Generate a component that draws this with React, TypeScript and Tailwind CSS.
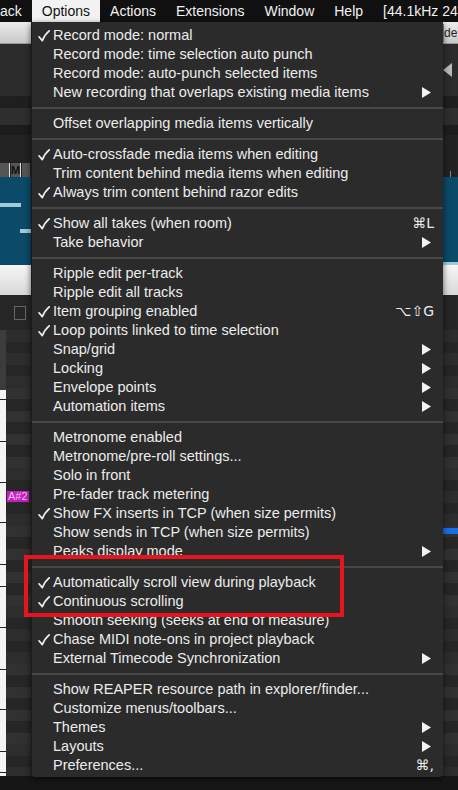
import type { ReactNode } from 'react';

type Item = { label: string; check?: boolean; sub?: boolean; keys?: string } | 'sep';

const items: Item[] = [
  { label: 'Record mode: normal', check: true },
  { label: 'Record mode: time selection auto punch' },
  { label: 'Record mode: auto-punch selected items' },
  { label: 'New recording that overlaps existing media items', sub: true },
  'sep',
  { label: 'Offset overlapping media items vertically' },
  'sep',
  { label: 'Auto-crossfade media items when editing', check: true },
  { label: 'Trim content behind media items when editing' },
  { label: 'Always trim content behind razor edits', check: true },
  'sep',
  { label: 'Show all takes (when room)', check: true, keys: '⌘L' },
  { label: 'Take behavior', sub: true },
  'sep',
  { label: 'Ripple edit per-track' },
  { label: 'Ripple edit all tracks' },
  { label: 'Item grouping enabled', check: true, keys: '⌥⇧G' },
  { label: 'Loop points linked to time selection', check: true },
  { label: 'Snap/grid', sub: true },
  { label: 'Locking', sub: true },
  { label: 'Envelope points', sub: true },
  { label: 'Automation items', sub: true },
  'sep',
  { label: 'Metronome enabled' },
  { label: 'Metronome/pre-roll settings...' },
  { label: 'Solo in front' },
  { label: 'Pre-fader track metering' },
  { label: 'Show FX inserts in TCP (when size permits)', check: true },
  { label: 'Show sends in TCP (when size permits)' },
  { label: 'Peaks display mode', sub: true },
  'sep',
  { label: 'Automatically scroll view during playback', check: true },
  { label: 'Continuous scrolling', check: true },
  { label: 'Smooth seeking (seeks at end of measure)' },
  { label: 'Chase MIDI note-ons in project playback', check: true },
  { label: 'External Timecode Synchronization', sub: true },
  'sep',
  { label: 'Show REAPER resource path in explorer/finder...' },
  { label: 'Customize menus/toolbars...' },
  { label: 'Themes', sub: true },
  { label: 'Layouts', sub: true },
  { label: 'Preferences...', keys: '⌘,' },
];

const topMenus = ['Actions', 'Extensions', 'Window', 'Help', '[44.1kHz 24'];

// 12 semitone rows per octave, true = black key row (darker)
const octave = [false, true, false, true, false, false, true, false, true, false, true, false];

function Arrow() {
  return (
    <svg width="9" height="11" viewBox="0 0 9 11" className="mr-[2px]">
      <path d="M0 0 L9 5.5 L0 11 Z" fill="#f2f2f2" />
    </svg>
  );
}

function Check() {
  return (
    <svg width="12" height="12" viewBox="0 0 12 12">
      <path d="M1 6.8 L4.3 10.6 C6 6.5 8 3.4 11.2 0.8" fill="none" stroke="#efefef" strokeWidth="1.7" strokeLinecap="round" strokeLinejoin="round" />
    </svg>
  );
}

function Band({ h, className, children }: { h: string; className: string; children?: ReactNode }) {
  return <div className={`${h} ${className} relative shrink-0`}>{children}</div>;
}

function PianoRoll() {
  const rows = Array.from({ length: 40 }, (_, i) => octave[i % 12]);
  const keyLines = [10, 52, 93, 133, 175, 197, 238, 280, 320, 362, 383, 424];
  return (
    <div className="flex h-[446px] shrink-0 overflow-hidden">
      <div className="flex w-[6px] shrink-0 flex-col">
        <div className="h-[60px] shrink-0 bg-[#3c3c3c]" />
        {keyLines.map((k, i) => (
          <div key={k} className="shrink-0 border-b border-[#222] bg-[#f4f4f4]" style={{ height: i === 0 ? 10 : k - keyLines[i - 1] }} />
        ))}
      </div>
      <div className="flex flex-1 flex-col">
        {rows.map((dark, i) => (
          <div key={i} className={`flex h-[11.5px] shrink-0 items-center ${dark ? 'bg-[#262626]' : i % 2 ? 'bg-[#313131]' : 'bg-[#2d2d2d]'}`}>
            {i === 14 && <span className="ml-[1px] bg-[#c21fc2] px-[1px] text-[11px] leading-[11px] text-[#f0c0f0]">A#2</span>}
            {i === 17 && <div className="ml-auto h-[6px] w-[15px] bg-[#1a6fe6]" />}
          </div>
        ))}
      </div>
    </div>
  );
}

function OptionsMenu() {
  return (
    <div className="absolute left-[31px] top-[22px] w-[412px] rounded-b-[4px] border-l border-[#1a1a1a] bg-[#2b2b2b] pb-[2px] pt-[4px] shadow-[0_2px_6px_rgba(0,0,0,0.6)]">
      {items.map((it, i) =>
        it === 'sep' ? (
          <div key={i} className="flex h-[12px] items-center">
            <div className="h-[2px] w-full bg-[#484848]" />
          </div>
        ) : (
          <div key={i} className="flex h-[19px] items-center text-[14.5px] text-[#ececec]">
            <span className="flex w-[21px] shrink-0 items-center pl-[6px]">{it.check && <Check />}</span>
            <span className="flex-1 whitespace-nowrap">{it.label}</span>
            {it.keys && <span className="whitespace-nowrap pr-[9px] font-['DejaVu_Sans',sans-serif] text-[14px]">{it.keys}</span>}
            {it.sub && (
              <span className="pr-[10px]">
                <Arrow />
              </span>
            )}
          </div>
        ),
      )}
    </div>
  );
}

export default function App() {
  return (
    <div className="relative flex h-[790px] w-[458px] flex-col overflow-hidden bg-[#1a1a1a] font-['Liberation_Sans',Arial,sans-serif]">
      <div className="flex h-[22px] shrink-0 items-center bg-[#101010] text-[14px] text-[#f2f2f2]">
        <span className="pr-[10px]">ack</span>
        <span className="flex h-full items-center bg-[#f2f2f2] px-[10px] text-[#111]">Options</span>
        {topMenus.map((m) => (
          <span key={m} className="whitespace-nowrap px-[10px]">
            {m}
          </span>
        ))}
      </div>

      <Band h="h-[22px]" className="flex items-center justify-end border-b border-[#999] bg-gradient-to-b from-[#ececec] to-[#c9c9c9]">
        <span className="w-[15px] border-l border-[#888] text-[12px] text-[#222]">de</span>
      </Band>
      <Band h="h-[52px]" className="flex items-center justify-end bg-[#2c2c2c]">
        <svg width="9" height="14" viewBox="0 0 9 14" className="mr-[6px]">
          <path d="M9 0 L0 7 L9 14 Z" fill="#b8b8b8" />
        </svg>
      </Band>
      <Band h="h-[12px]" className="bg-[#1f1f1f]" />
      <Band h="h-[17px]" className="bg-[#2e2e2e]" />
      <Band h="h-[10px]" className="bg-[#1c1c1c]" />
      <Band h="h-[42px]" className="flex items-end bg-[#222]">
        <div className="flex h-[14px] w-[31px] items-center gap-[1px] text-[11px] font-bold leading-none text-[#111]">
          <span className="h-full w-[10px] border-r border-[#ddd] bg-[#555]" />
          <span className="flex h-full w-[10px] items-center justify-center border-r border-[#ddd] bg-[#555]">M</span>
          <span className="h-full w-[8px] bg-[#555]" />
        </div>
        <div className="ml-auto mr-[7px] h-[6px] w-px self-end bg-[#888]" />
      </Band>
      <Band h="h-[88px]" className="flex flex-col bg-[#0b4a68]">
        <div className="mt-[26px] h-[4px] w-[21px] bg-[#9fcadb]" />
        <div className="ml-[20px] mt-[22px] h-[4px] w-[11px] bg-[#9fcadb]" />
        <div className="ml-auto mt-auto h-[3px] w-[15px] bg-[#9fcadb]" />
      </Band>
      <Band h="h-[30px]" className="bg-gradient-to-b from-[#f6f6f6] to-[#d8d8d8]" />
      <Band h="h-[35px]" className="flex items-center bg-[#262626]">
        <div className="ml-[14px] h-[14px] w-[12px] border border-[#666]" />
      </Band>
      <PianoRoll />
      <Band h="h-[14px]" className="bg-[#161616]" />

      <OptionsMenu />
      <div className="absolute left-[24px] top-[555px] h-[62px] w-[320px] border-[4px] border-[#e8141b]" />
    </div>
  );
}
